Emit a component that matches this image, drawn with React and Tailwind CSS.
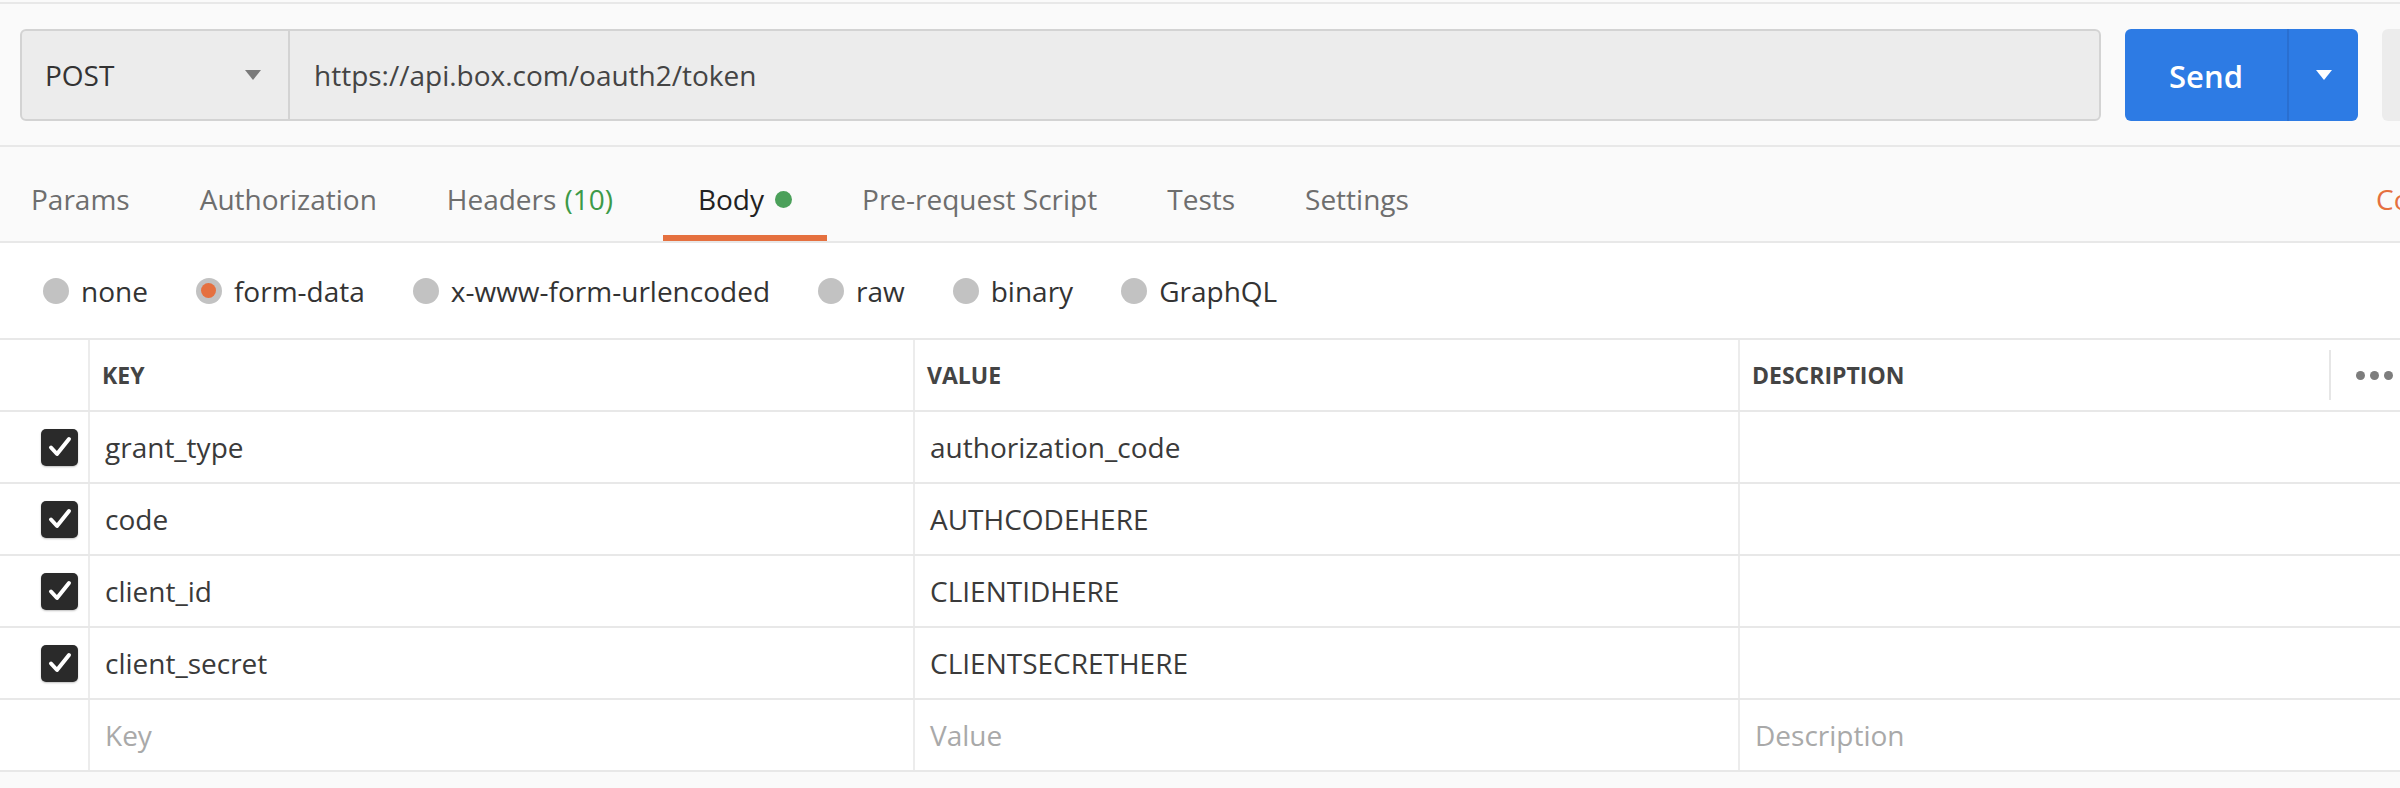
import React from 'react'

const tabs = [
  { label: 'Params' },
  { label: 'Authorization' },
  { label: 'Headers', count: '(10)' },
  { label: 'Body', active: true },
  { label: 'Pre-request Script' },
  { label: 'Tests' },
  { label: 'Settings' }
]

const bodyTypes = ['none', 'form-data', 'x-www-form-urlencoded', 'raw', 'binary', 'GraphQL']

const rows = [
  { key: 'grant_type', value: 'authorization_code' },
  { key: 'code', value: 'AUTHCODEHERE' },
  { key: 'client_id', value: 'CLIENTIDHERE' },
  { key: 'client_secret', value: 'CLIENTSECRETHERE' }
]

function Caret({ color = '#7a7a7a' }) {
  return (
    <svg width="18" height="12" viewBox="0 0 18 12">
      <path d="M1 1 L17 1 L9 11 Z" fill={color} />
    </svg>
  )
}

function Checkbox() {
  return (
    <div className="w-[37px] h-[37px] rounded-[5px] bg-[#2a2a2a] flex items-center justify-center shadow-[0_1px_2px_rgba(0,0,0,0.25)]">
      <svg width="26" height="26" viewBox="0 0 26 26">
        <path d="M4 13.5 L10 20 L22 5" fill="none" stroke="#fff" strokeWidth="4" strokeLinecap="round" strokeLinejoin="round" />
      </svg>
    </div>
  )
}

export default function App() {
  return (
    <div className="w-[2400px] h-[788px] overflow-hidden bg-[#fafafa] font-['Open_Sans','Noto_Sans',sans-serif] text-[28px] leading-none text-[#333]">
      {/* top edge */}
      <div className="h-[2px]" />
      <div className="h-[2px] bg-[#e8e8e8]" />

      {/* request bar */}
      <div className="flex items-center pl-[20px] pt-[25px] pb-[24px] border-b-2 border-[#e8e8e8]">
        <div className="flex w-[2081px] h-[92px] shrink-0 rounded-[6px] border-2 border-[#d3d3d3] bg-[#ececec]">
          <div className="w-[268px] shrink-0 flex items-center justify-between pl-[23px] pr-[26px] border-r-2 border-[#d3d3d3]">
            <span className="text-[#333]">POST</span>
            <Caret />
          </div>
          <div className="flex items-center pl-[24px] text-[#444]">https://api.box.com/oauth2/token</div>
        </div>
        <div className="ml-[24px] flex w-[233px] h-[92px] shrink-0 rounded-[6px] bg-[#2d7be4] text-white">
          <div className="w-[162px] flex items-center justify-center pt-[3px] text-[31px] font-semibold">Send</div>
          <div className="flex-1 flex items-center justify-center border-l-2 border-[#2a6fd0]">
            <Caret color="#ffffff" />
          </div>
        </div>
        <div className="ml-[24px] w-[100px] h-[92px] shrink-0 rounded-[6px] bg-[#ececec]" />
      </div>

      {/* tabs */}
      <div className="flex items-stretch h-[96px] pl-[31px] pt-[10px] border-b-2 border-[#e8e8e8]">
        {tabs.map((t) => (
          <div
            key={t.label}
            className={`relative flex items-center shrink-0 whitespace-nowrap ${t.active ? 'ml-[15px] mr-[70px]' : 'mr-[70px]'} ${t.active ? 'text-[#222]' : 'text-[#6e6e6e]'}`}
          >
            {t.label}
            {t.count && <span className="ml-[8px] text-[#3d9a48]">{t.count}</span>}
            {t.active && <span className="ml-[11px] w-[17px] h-[17px] rounded-full bg-[#4ba05a]" />}
            {t.active && <span className="absolute -left-[35px] -right-[35px] bottom-0 h-[6px] bg-[#e5703f]" />}
          </div>
        ))}
        <div className="flex-1" />
        <div className="w-[24px] shrink-0 flex items-center whitespace-nowrap text-[#e5703f]">Cookies</div>
      </div>

      {/* body types */}
      <div className="flex items-center h-[95px] pl-[43px] bg-white">
        {bodyTypes.map((b) => (
          <div key={b} className="flex items-center mr-[48px] whitespace-nowrap">
            <span className="w-[26px] h-[26px] rounded-full bg-[#c2c2c2] flex items-center justify-center">
              {b === 'form-data' && <span className="w-[15px] h-[15px] rounded-full bg-[#e5703f]" />}
            </span>
            <span className="ml-[12px] text-[#333]">{b}</span>
          </div>
        ))}
      </div>

      {/* table */}
      <div className="bg-white border-t-2 border-[#e8e8e8]">
        <div className="grid grid-cols-[90px_825px_825px_660px] h-[72px] border-b-2 border-[#e8e8e8] text-[23px] font-bold text-[#444]">
          <div className="border-r-2 border-[#ececec]" />
          <div className="flex items-center pl-[12px] border-r-2 border-[#ececec]">KEY</div>
          <div className="flex items-center pl-[12px] border-r-2 border-[#ececec]">VALUE</div>
          <div className="flex items-center pl-[12px]">
            <span className="w-[577px]">DESCRIPTION</span>
            <span className="h-[50px] w-[2px] bg-[#e6e6e6]" />
            <span className="ml-[25px] flex gap-[5px]">
              <span className="w-[9px] h-[9px] rounded-full bg-[#7d7d7d]" />
              <span className="w-[9px] h-[9px] rounded-full bg-[#7d7d7d]" />
              <span className="w-[9px] h-[9px] rounded-full bg-[#7d7d7d]" />
            </span>
          </div>
        </div>
        {rows.map((r) => (
          <div key={r.key} className="grid grid-cols-[90px_825px_825px_660px] h-[72px] border-b-2 border-[#e8e8e8]">
            <div className="flex items-center justify-end pr-[10px] border-r-2 border-[#ececec]">
              <Checkbox />
            </div>
            <div className="flex items-center pl-[15px] border-r-2 border-[#ececec] text-[#3a3a3a]">{r.key}</div>
            <div className="flex items-center pl-[15px] border-r-2 border-[#ececec] text-[#3a3a3a]">{r.value}</div>
            <div />
          </div>
        ))}
        <div className="grid grid-cols-[90px_825px_825px_660px] h-[72px] border-b-2 border-[#e8e8e8] text-[#a9a9a9]">
          <div className="border-r-2 border-[#ececec]" />
          <div className="flex items-center pl-[15px] border-r-2 border-[#ececec]">Key</div>
          <div className="flex items-center pl-[15px] border-r-2 border-[#ececec]">Value</div>
          <div className="flex items-center pl-[15px]">Description</div>
        </div>
      </div>
    </div>
  )
}
